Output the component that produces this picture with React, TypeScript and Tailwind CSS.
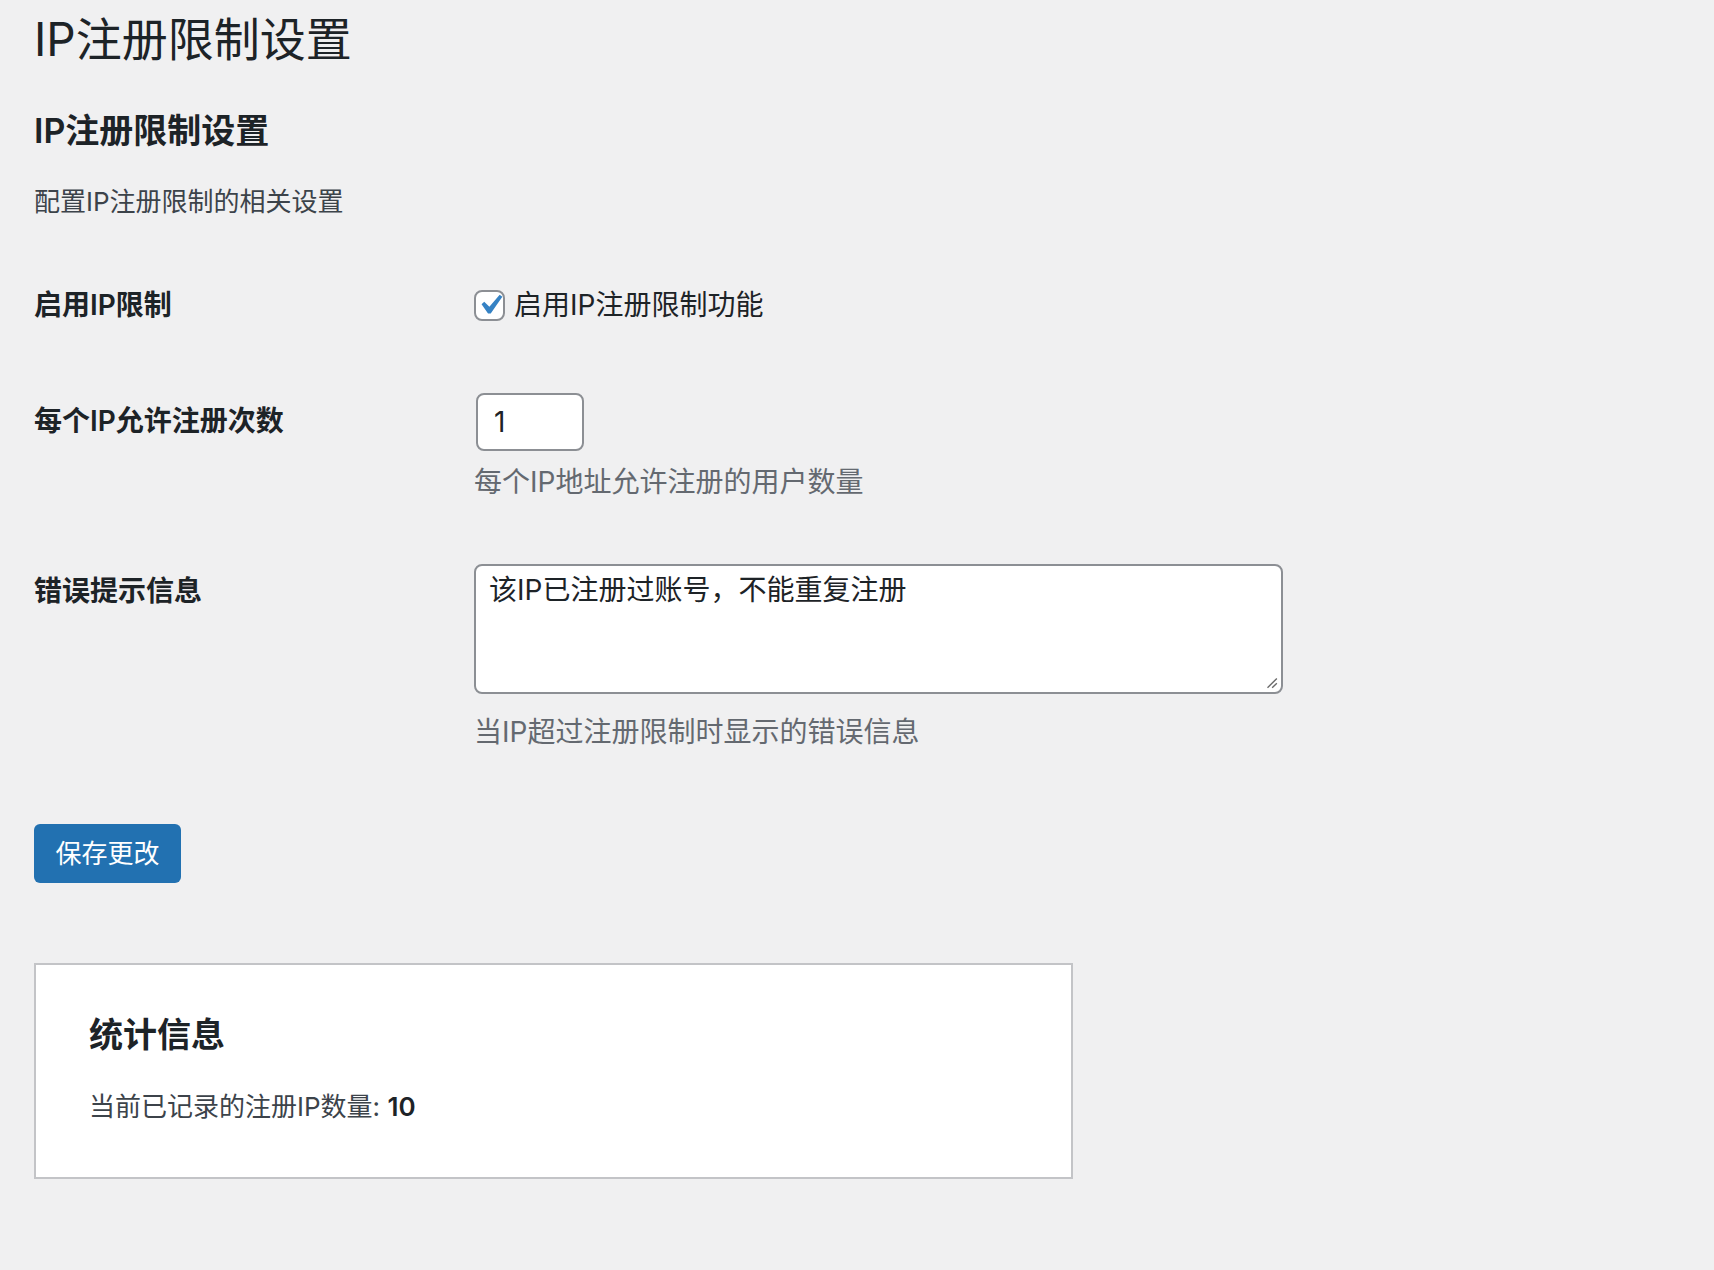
import React from 'react';

const font = { fontFamily: 'Inter, "Noto Sans CJK SC", "Noto Sans", sans-serif' };

const App: React.FC = () => {
  return (
    <div className="min-h-[1270px] w-full bg-[#f0f0f1] pt-[9px] text-[#1d2327]" style={font}>
      <div className="pl-[34px] pr-[40px]">
        <h1 className="h-[60px] text-[46px] leading-[60px] font-normal">IP注册限制设置</h1>
        <h2 className="mt-[40px] h-[44px] text-[34px] leading-[44px] font-semibold">IP注册限制设置</h2>
        <p className="mt-[29px] h-[40px] text-[26px] leading-[40px] text-[#3c434a]">配置IP注册限制的相关设置</p>

        <div className="mt-[23px]">
          {/* row 1 */}
          <div className="flex pt-[40px] pb-[36px]">
            <div className="w-[440px] shrink-0 text-[28px] leading-[40px] font-semibold">启用IP限制</div>
            <label className="flex h-[40px] items-center gap-[9px] text-[28px] leading-[40px]">
              <span className="flex h-[31px] w-[31px] items-center justify-center overflow-visible rounded-[8px] border-2 border-[#8c8f94] bg-white">
                <svg viewBox="0 0 20 20" className="-m-[6px] h-[40px] w-[40px] shrink-0">
                  <path d="M14.83 4.89l1.34.94-5.81 8.38H9.02L5.78 9.67l1.34-1.25 2.57 2.4z" fill="#3582c4" />
                </svg>
              </span>
              <span>启用IP注册限制功能</span>
            </label>
          </div>

          {/* row 2 */}
          <div className="flex pt-[32px] pb-[29px]">
            <div className="w-[440px] shrink-0 pt-[8px] text-[28px] leading-[40px] font-semibold">每个IP允许注册次数</div>
            <div>
              <div className="ml-[2px] flex h-[58px] w-[108px] items-center rounded-[8px] border-2 border-[#8c8f94] bg-white pl-[16px] text-[28px]">1</div>
              <p className="mt-[11px] text-[28px] leading-[40px] text-[#646970]">每个IP地址允许注册的用户数量</p>
            </div>
          </div>

          {/* row 3 */}
          <div className="flex pt-[40px]">
            <div className="w-[440px] shrink-0 text-[28px] leading-[40px] font-semibold">错误提示信息</div>
            <div className="-mt-[7px]">
              <div className="relative h-[130px] w-[809px] rounded-[8px] border-2 border-[#8c8f94] bg-white px-[13px] pt-[4px] text-[28px] leading-[40px]">
                该IP已注册过账号，不能重复注册
                <svg viewBox="0 0 12 12" className="absolute right-[3px] bottom-[3px] h-[14px] w-[14px]">
                  <path d="M11 3L3 11M11 7L7 11" stroke="#6b6b6b" strokeWidth="1.2" fill="none" />
                </svg>
              </div>
              <p className="mt-[18px] text-[28px] leading-[40px] text-[#646970]">当IP超过注册限制时显示的错误信息</p>
            </div>
          </div>
        </div>

        <button className="mt-[72px] flex h-[59px] w-[147px] items-center justify-center rounded-[6px] bg-[#2271b1] text-[26px] text-white">
          保存更改
        </button>

        <div className="mt-[80px] h-[216px] w-[1039px] border-2 border-[#c3c4c7] bg-white px-[53px] pt-[48px]">
          <h3 className="h-[44px] text-[34px] leading-[44px] font-semibold">统计信息</h3>
          <p className="mt-[30px] text-[26px] leading-[40px] text-[#3c434a]">
            当前已记录的注册IP数量: <strong className="font-semibold text-[#1d2327]">10</strong>
          </p>
        </div>
      </div>
    </div>
  );
};

export default App;
